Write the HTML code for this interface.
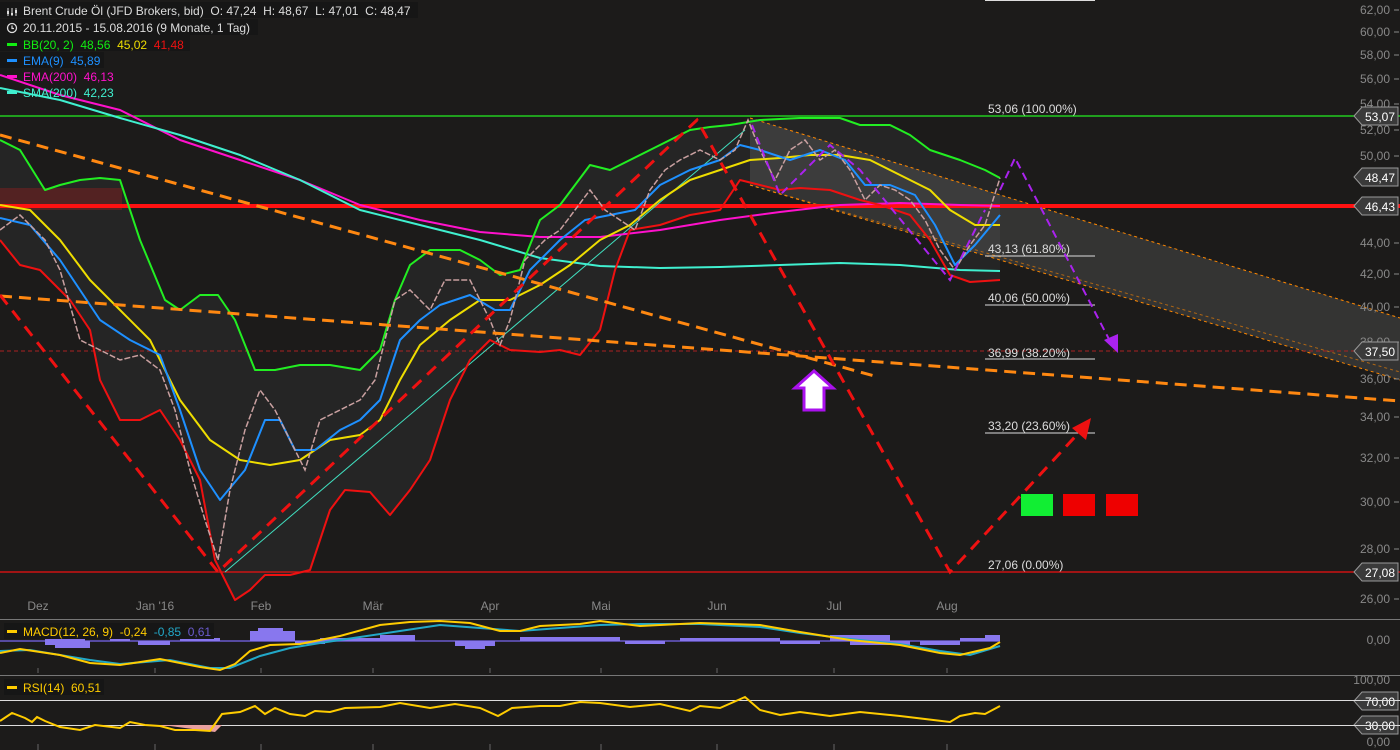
<!DOCTYPE html>
<html><head><meta charset="utf-8"><style>
html,body{margin:0;padding:0;background:#1c1b1a;}
svg{display:block;font-family:"Liberation Sans",sans-serif;}
text{white-space:pre;}
</style></head><body>
<svg width="1400" height="750" viewBox="0 0 1400 750" xmlns="http://www.w3.org/2000/svg">
<rect width="1400" height="750" fill="#1c1b1a"/>
<polygon fill="#252525" points="0,140 20,150 45,190 60,185 80,180 100,178 120,180 140,240 165,300 180,310 200,295 218,295 235,320 255,370 275,370 300,365 330,365 360,370 380,350 395,300 410,265 430,250 460,250 480,260 500,275 520,270 540,220 560,205 575,185 590,165 610,170 630,160 650,150 670,140 690,130 710,127 730,125 760,120 800,118 840,118 860,125 890,125 910,135 930,150 960,160 985,170 1000,178 1000,280 970,282 950,275 930,240 910,215 880,205 860,200 830,190 800,188 780,190 760,185 740,180 720,210 690,215 660,225 630,230 615,270 600,330 580,355 560,350 540,352 510,350 490,340 470,360 450,400 430,460 410,490 390,515 370,492 345,490 330,510 310,570 290,575 265,575 250,590 235,600 215,560 200,480 180,440 160,410 140,420 120,420 100,380 90,330 70,300 40,270 20,265 0,240"/>
<polygon fill="rgba(255,255,255,0.11)" points="750,118 1400,318 1400,380 750,185"/>
<line x1="750" y1="118" x2="1400" y2="318" stroke="#ff8800" stroke-width="1" stroke-dasharray="3,3"/>
<line x1="750" y1="185" x2="1400" y2="380" stroke="#ff8800" stroke-width="1" stroke-dasharray="3,3"/>
<line x1="750" y1="185" x2="1400" y2="372" stroke="#ff8800" stroke-width="1" stroke-dasharray="3,3" opacity=".6"/>
<rect x="0" y="188" width="122" height="22" fill="rgba(140,30,30,0.45)"/>
<line x1="0" y1="116" x2="1400" y2="116" stroke="#22ee22" stroke-width="1.2"/>
<line x1="0" y1="572" x2="1400" y2="572" stroke="#ee1111" stroke-width="1.2"/>
<line x1="0" y1="351" x2="1400" y2="351" stroke="#aa2222" stroke-width="1" stroke-dasharray="4,3"/>
<line x1="0" y1="206" x2="1400" y2="206" stroke="#ff1111" stroke-width="4"/>
<g stroke="#ddd" stroke-width="1">
<line x1="985" y1="0.5" x2="1095" y2="0.5"/><line x1="985" y1="256" x2="1095" y2="256"/><line x1="985" y1="305" x2="1095" y2="305"/><line x1="985" y1="359" x2="1095" y2="359"/><line x1="985" y1="433" x2="1095" y2="433"/>
</g>
<g fill="#ddd" font-size="12">
<text x="988" y="113">53,06 (100.00%)</text><text x="988" y="253">43,13 (61.80%)</text><text x="988" y="302">40,06 (50.00%)</text><text x="988" y="357">36,99 (38.20%)</text><text x="988" y="430">33,20 (23.60%)</text><text x="988" y="569">27,06 (0.00%)</text>
</g>
<line x1="225" y1="572" x2="745" y2="130" stroke="#40e0c0" stroke-width="1"/>
<g fill="none" stroke-width="2" stroke-linejoin="round">
<polyline stroke="#ff11cc" points="0,75 60,95 120,110 180,140 240,160 300,180 360,205 420,220 480,232 540,237 600,237 660,230 720,220 780,212 840,205 900,203 960,205 1000,206"/>
<polyline stroke="#40f0d0" points="0,88 60,100 120,118 180,135 240,155 300,180 360,210 420,225 480,240 540,258 600,266 660,268 720,267 780,265 840,263 900,265 960,270 1000,271"/>
<polyline stroke="#22ee22" points="0,140 20,150 45,190 60,185 80,180 100,178 120,180 140,240 165,300 180,310 200,295 218,295 235,320 255,370 275,370 300,365 330,365 360,370 380,350 395,300 410,265 430,250 460,250 480,260 500,275 520,270 540,220 560,205 575,185 590,165 610,170 630,160 650,150 670,140 690,130 710,127 730,125 760,120 800,118 840,118 860,125 890,125 910,135 930,150 960,160 985,170 1000,178"/>
<polyline stroke="#ee1111" points="0,240 20,265 40,270 70,300 90,330 100,380 120,420 140,420 160,410 180,440 200,480 215,560 235,600 250,590 265,575 290,575 310,570 330,510 345,490 370,492 390,515 410,490 430,460 450,400 470,360 490,340 510,350 540,352 560,350 580,355 600,330 615,270 630,230 660,225 690,215 720,210 740,180 760,185 780,190 800,188 830,190 860,200 880,205 910,215 930,240 950,275 970,282 1000,280"/>
<polyline stroke="#eedd00" points="0,205 30,210 60,240 90,280 120,310 150,340 180,400 210,440 240,460 270,465 300,460 330,440 360,435 380,420 400,380 420,345 450,320 480,300 510,300 540,285 570,265 600,240 630,225 660,200 690,180 720,170 750,160 780,158 810,155 840,155 870,160 900,175 930,190 950,210 975,225 1000,225"/>
<polyline stroke="#1e90ff" points="0,218 30,225 60,260 80,290 100,320 130,340 160,355 180,410 200,470 220,500 245,470 265,420 280,420 295,450 315,450 340,430 360,420 380,400 400,340 420,320 440,305 470,295 495,310 510,310 530,270 560,240 585,220 610,215 635,210 660,185 690,170 720,160 740,145 760,150 790,160 820,150 845,160 865,185 890,185 915,195 935,225 955,265 975,245 1000,215"/>
</g>
<polyline fill="none" stroke="#c9a0a0" stroke-width="1.5" stroke-dasharray="6,2" points="0,230 20,215 45,240 60,270 80,340 100,350 120,360 140,355 160,370 175,410 190,470 205,520 218,560 230,490 245,430 260,390 275,410 290,440 305,470 320,420 340,410 360,400 375,380 395,300 410,290 430,310 445,280 470,280 490,320 500,345 510,320 525,260 545,240 560,230 575,210 590,190 605,210 620,220 635,230 650,190 665,170 680,160 700,150 720,160 735,150 748,120 760,150 775,180 790,150 805,140 820,160 835,150 850,170 865,200 880,185 895,190 910,200 925,220 940,250 955,270 970,245 985,225 1000,178"/>
<g stroke="#ff8811" stroke-width="3" stroke-dasharray="12,7" fill="none">
<line x1="0" y1="135" x2="878" y2="377"/>
<line x1="0" y1="296" x2="1400" y2="401"/>
</g>
<g stroke="#ee1111" stroke-width="3" stroke-dasharray="12,8" fill="none">
<polyline points="0,295 218,572 697,120 950,572 1085,426"/>
</g>
<polygon fill="#ee1111" points="1091,418 1072,428 1086,440"/>
<g stroke="#aa22ee" stroke-width="2" stroke-dasharray="8,5" fill="none">
<polyline points="1000,190 1015,158 1112,345"/>
<polyline points="752,125 780,195 830,145 860,170 905,225 950,280 985,210"/>
</g>
<polygon fill="#aa22ee" points="1118,353 1104,340 1118,334"/>
<polygon fill="#ffffff" stroke="#aa11ee" stroke-width="3" points="814,371 833,388 824,388 824,410 804,410 804,388 795,388"/>
<rect x="1021" y="494" width="32" height="22" fill="#11ee33"/>
<rect x="1063" y="494" width="32" height="22" fill="#ee0000"/>
<rect x="1106" y="494" width="32" height="22" fill="#ee0000"/>
<rect x="0" y="2" width="418" height="16" fill="#161616"/>
<rect x="0" y="19" width="258" height="16" fill="#161616"/>
<rect x="0" y="35" width="190" height="16" fill="#161616"/>
<rect x="0" y="52" width="104" height="16" fill="#161616"/>
<g font-size="12">
<text x="23" y="15" fill="#ddd">Brent Crude Öl (JFD Brokers, bid)  O: 47,24  H: 48,67  L: 47,01  C: 48,47</text>
<text x="23" y="32" fill="#ddd">20.11.2015 - 15.08.2016 (9 Monate, 1 Tag)</text>
<circle cx="12" cy="28" r="4.5" fill="none" stroke="#ddd" stroke-width="1.3"/>
<path d="M12 25.5V28.5h2" stroke="#ddd" fill="none" stroke-width="1.2"/>
<path d="M8 8v8M12 8v8M16 8v8" stroke="#ddd" stroke-width="1"/>
<rect x="7" y="11" width="2" height="3" fill="#ddd"/><rect x="11" y="13" width="2" height="2" fill="#ddd"/><rect x="15" y="10" width="2" height="3" fill="#ddd"/>
<rect x="7" y="43" width="10" height="3" fill="#11ee11"/><text x="23" y="49" fill="#11ee11">BB(20, 2)  48,56  <tspan fill="#eedd00">45,02</tspan>  <tspan fill="#ee1111">41,48</tspan></text>
<rect x="7" y="59" width="10" height="3" fill="#1e90ff"/><text x="23" y="65" fill="#1e90ff">EMA(9)  45,89</text>
<rect x="7" y="75" width="10" height="3" fill="#ff11cc"/><text x="23" y="81" fill="#ff11cc">EMA(200)  46,13</text>
<rect x="7" y="91" width="10" height="3" fill="#40f0d0"/><text x="23" y="97" fill="#40f0d0">SMA(200)  42,23</text>
</g>
<g font-size="12" fill="#888" text-anchor="end">
<text x="1390" y="14">62,00</text><text x="1390" y="36">60,00</text><text x="1390" y="59">58,00</text><text x="1390" y="83">56,00</text><text x="1390" y="108">54,00</text><text x="1390" y="134">52,00</text><text x="1390" y="160">50,00</text><text x="1390" y="247">44,00</text><text x="1390" y="278">42,00</text><text x="1390" y="311">40,00</text><text x="1390" y="346">38,00</text><text x="1390" y="383">36,00</text><text x="1390" y="421">34,00</text><text x="1390" y="462">32,00</text><text x="1390" y="506">30,00</text><text x="1390" y="553">28,00</text><text x="1390" y="603">26,00</text>
<text x="1390" y="644">0,00</text><text x="1390" y="684">100,00</text><text x="1390" y="746">0,00</text>
</g>
<g stroke="#888"><path d="M1394 10h5M1394 32h5M1394 55h5M1394 79h5M1394 104h5M1394 130h5M1394 156h5M1394 243h5M1394 274h5M1394 307h5M1394 342h5M1394 379h5M1394 417h5M1394 458h5M1394 502h5M1394 549h5M1394 599h5"/></g>
<g font-size="12" fill="#fff" text-anchor="middle">
<path d="M1354 116 l8-9 h36 v18 h-36z" fill="#3a3a3a" stroke="#999"/><text x="1380" y="121">53,07</text>
<path d="M1354 177 l8-9 h36 v18 h-36z" fill="#3a3a3a" stroke="#999"/><text x="1380" y="182">48,47</text>
<path d="M1354 206 l8-9 h36 v18 h-36z" fill="#3a3a3a" stroke="#999"/><text x="1380" y="211">46,43</text>
<path d="M1354 351 l8-9 h36 v18 h-36z" fill="#3a3a3a" stroke="#999"/><text x="1380" y="356">37,50</text>
<path d="M1354 572 l8-9 h36 v18 h-36z" fill="#3a3a3a" stroke="#999"/><text x="1380" y="577">27,08</text>
<path d="M1354 701 l8-9 h36 v18 h-36z" fill="#3a3a3a" stroke="#999"/><text x="1380" y="706">70,00</text>
<path d="M1354 725 l8-9 h36 v18 h-36z" fill="#3a3a3a" stroke="#999"/><text x="1380" y="730">30,00</text>
</g>
<g font-size="12" fill="#888" text-anchor="middle">
<text x="38" y="610">Dez</text><text x="155" y="610">Jan '16</text><text x="261" y="610">Feb</text><text x="373" y="610">Mär</text><text x="490" y="610">Apr</text><text x="601" y="610">Mai</text><text x="717" y="610">Jun</text><text x="834" y="610">Jul</text><text x="947" y="610">Aug</text>
</g>
<line x1="0" y1="619.5" x2="1400" y2="619.5" stroke="#777"/>
<line x1="0" y1="675.5" x2="1400" y2="675.5" stroke="#777"/>
<g stroke="#666"><path d="M38 668v5M155 668v5M261 668v5M373 668v5M490 668v5M601 668v5M717 668v5M834 668v5M947 668v5M38 744v6M155 744v6M261 744v6M373 744v6M490 744v6M601 744v6M717 744v6M834 744v6M947 744v6"/></g>
<line x1="0" y1="641" x2="1000" y2="641" stroke="#6a5acd" stroke-width="1.5"/>
<g fill="#8877ee">
<rect x="45" y="638" width="40" height="3"/>
<rect x="45" y="641" width="45" height="4"/><rect x="55" y="641" width="35" height="7"/>
<rect x="110" y="638" width="20" height="3"/>
<rect x="138" y="641" width="32" height="4"/>
<rect x="180" y="638" width="40" height="3"/>
<rect x="250" y="631" width="45" height="10"/><rect x="258" y="628" width="25" height="13"/>
<rect x="295" y="641" width="30" height="3"/>
<rect x="320" y="638" width="95" height="3"/><rect x="380" y="635" width="35" height="6"/>
<rect x="455" y="641" width="40" height="5"/><rect x="465" y="641" width="20" height="8"/>
<rect x="520" y="637" width="100" height="4"/>
<rect x="625" y="641" width="40" height="3"/>
<rect x="680" y="638" width="100" height="3"/>
<rect x="780" y="641" width="40" height="3"/>
<rect x="830" y="635" width="60" height="6"/><rect x="850" y="641" width="60" height="4"/>
<rect x="920" y="641" width="40" height="4"/>
<rect x="960" y="638" width="40" height="3"/><rect x="985" y="635" width="15" height="6"/>
</g>
<polyline fill="none" stroke="#22a8c8" stroke-width="2" points="0,651 30,650 60,655 90,660 120,664 170,660 210,668 230,668 260,656 290,648 320,643 360,637 400,631 440,625 480,628 520,631 560,628 600,625 640,624 700,624 760,627 800,633 850,639 900,644 940,651 970,655 1000,646"/>
<polyline fill="none" stroke="#ffcc00" stroke-width="2" points="0,653 20,649 60,655 90,663 120,665 160,659 200,667 220,670 235,664 250,651 270,645 300,644 340,636 380,625 410,622 440,621 470,623 500,631 520,631 540,626 580,624 600,621 640,626 700,623 760,625 800,632 850,640 900,645 940,653 960,655 990,648 1000,642"/>
<rect x="4" y="623" width="210" height="16" fill="#161616"/>
<rect x="7" y="630" width="10" height="3" fill="#ffcc00"/>
<text x="23" y="636" font-size="12" fill="#ffcc00">MACD(12, 26, 9)  -0,24  <tspan fill="#22a8c8">-0,85</tspan>  <tspan fill="#6a5acd">0,61</tspan></text>
<line x1="0" y1="700.5" x2="1400" y2="700.5" stroke="#ddd"/>
<line x1="0" y1="725.5" x2="1400" y2="725.5" stroke="#ddd"/>
<polygon fill="#e8a0a0" points="122,725 170,726 215,732 222,725"/>
<polyline fill="none" stroke="#ffcc00" stroke-width="2" points="0,721 12,713 25,718 32,722 37,717 45,721 60,727 80,730 95,725 120,728 130,722 145,725 160,726 175,730 195,730 210,731 222,714 240,712 255,706 265,714 275,708 290,714 305,716 315,711 330,712 345,708 380,707 400,703 430,708 455,704 480,708 498,716 512,708 540,706 560,706 580,702 600,703 630,707 660,704 690,711 700,706 720,708 745,697 760,710 780,715 800,712 830,716 860,712 900,716 925,719 950,722 960,716 975,713 985,714 1000,706"/>
<rect x="4" y="679" width="100" height="16" fill="#161616"/>
<rect x="7" y="686" width="10" height="3" fill="#ffcc00"/>
<text x="23" y="692" font-size="12" fill="#ffcc00">RSI(14)  60,51</text>
</svg>
</body></html>
